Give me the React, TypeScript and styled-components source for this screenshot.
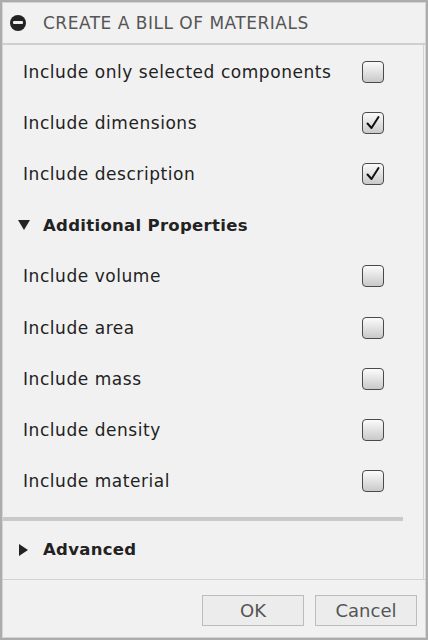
import { createGlobalStyle } from "styled-components";
import styled from "styled-components";

const GlobalStyle = createGlobalStyle`
  html, body {
    margin: 0;
    padding: 0;
    background: #f1f1f1;
  }
  body {
    font-family: "DejaVu Sans", "Liberation Sans", sans-serif;
  }
`;

type Option = { label: string; checked: boolean };

const mainOptions: Option[] = [
  { label: "Include only selected components", checked: false },
  { label: "Include dimensions", checked: true },
  { label: "Include description", checked: true },
];

const extraOptions: Option[] = [
  { label: "Include volume", checked: false },
  { label: "Include area", checked: false },
  { label: "Include mass", checked: false },
  { label: "Include density", checked: false },
  { label: "Include material", checked: false },
];

const CheckBox = ({ checked }: { checked: boolean }) => (
  <Box>
    {checked && (
      <svg width="18" height="18" viewBox="0 0 18 18">
        <path
          d="M3.5 9.5 L7.5 14 L14.5 3"
          fill="none"
          stroke="#111"
          strokeWidth="2"
          strokeLinecap="round"
          strokeLinejoin="round"
        />
      </svg>
    )}
  </Box>
);

const OptionRow = ({ label, checked }: Option) => (
  <Row>
    <Label>{label}</Label>
    <CheckBox checked={checked} />
  </Row>
);

const App = () => {
  return (
    <>
      <GlobalStyle />
      <Dialog>
        <Header>
          <CollapseIcon>
            <span />
          </CollapseIcon>
          <Title>CREATE A BILL OF MATERIALS</Title>
        </Header>

        <Body>
          {mainOptions.map((o) => (
            <OptionRow key={o.label} {...o} />
          ))}

          {/* Additional Properties */}
          <Row>
            <GroupTitle>
              <Triangle open />
              Additional Properties
            </GroupTitle>
          </Row>
          {extraOptions.map((o) => (
            <OptionRow key={o.label} {...o} />
          ))}

          <Separator />

          <AdvancedRow>
            <GroupTitle>
              <Triangle />
              Advanced
            </GroupTitle>
          </AdvancedRow>
        </Body>

        <Footer>
          <Button>OK</Button>
          <Button>Cancel</Button>
        </Footer>
      </Dialog>
    </>
  );
};

export default App;

const Dialog = styled.div`
  width: 428px;
  height: 640px;
  box-sizing: border-box;
  border: 2px solid #acacac;
  box-shadow: inset 0 0 0 1px #d4d4d4;
  background: #f1f1f1;
  display: flex;
  flex-direction: column;
  overflow: hidden;
`;

const Header = styled.div`
  height: 41px;
  display: flex;
  align-items: center;
  padding: 0 0 0 8px;
  border-bottom: 2px solid #cfcfcf;
  flex-shrink: 0;
`;

const CollapseIcon = styled.div`
  width: 16px;
  height: 16px;
  border-radius: 50%;
  background: #222;
  display: flex;
  align-items: center;
  justify-content: center;
  margin-right: 17px;
  span {
    width: 10px;
    height: 3px;
    background: #eee;
    border-radius: 1px;
  }
`;

const Title = styled.div`
  color: #555;
  font-size: 17px;
  letter-spacing: 0.5px;
`;

const Body = styled.div`
  flex: 1;
  display: flex;
  flex-direction: column;
  padding-top: 1px;
  border-right: 1px solid #d4d4d4;
  margin-right: 2px;
`;

const Row = styled.div`
  height: 51.2px;
  display: flex;
  align-items: center;
  justify-content: space-between;
  padding: 0 39px 0 21px;
  flex-shrink: 0;
`;

const Label = styled.span`
  font-size: 17px;
  letter-spacing: 0.55px;
  color: #222;
`;

const Box = styled.div`
  width: 20px;
  height: 20px;
  border: 1px solid #4a4a4a;
  border-radius: 4px;
  background: linear-gradient(#fbfbfb, #c9c9c9);
  display: flex;
  align-items: center;
  justify-content: center;
`;

const GroupTitle = styled.div`
  display: flex;
  align-items: center;
  font-weight: bold;
  font-size: 16.5px;
  letter-spacing: 0.3px;
  color: #222;
`;

const Triangle = styled.span<{ open?: boolean }>`
  width: 0;
  height: 0;
  margin-left: -5px;
  margin-right: 13px;
  ${({ open }) =>
    open
      ? `border-left: 6px solid transparent;
         border-right: 6px solid transparent;
         border-top: 10px solid #222;`
      : `border-top: 6.5px solid transparent;
         border-bottom: 6.5px solid transparent;
         border-left: 9px solid #222;
         margin-left: -4px;
         margin-right: 15px;`}
`;

const Separator = styled.div`
  height: 4px;
  background: #c9c9c9;
  margin: 10px 20px 0 1px;
`;

const AdvancedRow = styled(Row)`
  height: 58px;
`;

const Footer = styled.div`
  flex: 1;
  border-top: 1px solid #d2d2d2;
  display: flex;
  justify-content: flex-end;
  align-items: flex-start;
  gap: 11px;
  padding: 15px 9px 0 0;
`;

const Button = styled.button`
  width: 102px;
  height: 31px;
  border: 1px solid #bcbcbc;
  background: #ececec;
  color: #555;
  font-family: "DejaVu Sans", "Liberation Sans", sans-serif;
  font-size: 18px;
  padding: 0;
`;
